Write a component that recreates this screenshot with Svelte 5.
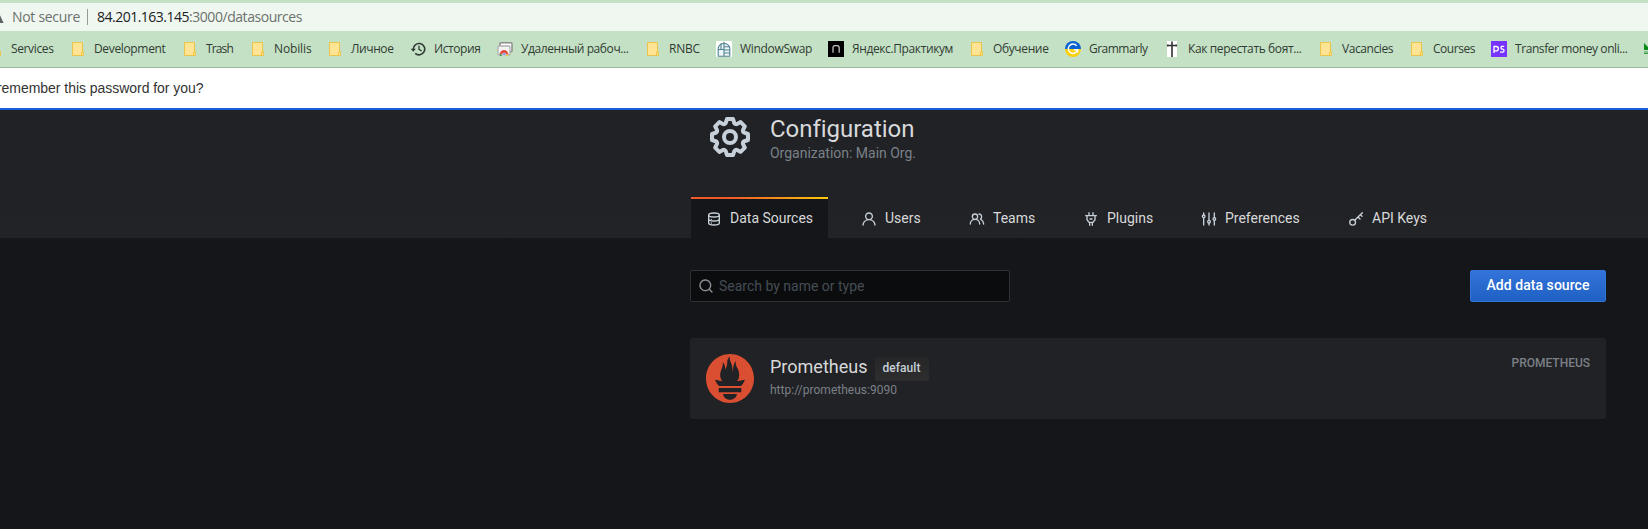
<script>
  const bookmarks = [
    { icon: 'folder', label: 'Services', item: 83, text: 42.5 },
    { icon: 'folder', label: 'Development', item: 112, text: 71.5 },
    { icon: 'folder', label: 'Trash', item: 68, text: 27 },
    { icon: 'folder', label: 'Nobilis', item: 77, text: 37.5 },
    { icon: 'folder', label: 'Личное', item: 83, text: 42.5 },
    { icon: 'history', label: 'История', item: 87, text: 46.5 },
    { icon: 'remote', label: 'Удаленный рабоч...', item: 148, text: 107.5 },
    { icon: 'folder', label: 'RNBC', item: 71, text: 31 },
    { icon: 'window', label: 'WindowSwap', item: 112, text: 72 },
    { icon: 'practicum', label: 'Яндекс.Практикум', item: 141, text: 101 },
    { icon: 'folder', label: 'Обучение', item: 96, text: 55.5 },
    { icon: 'grammarly', label: 'Grammarly', item: 99, text: 58.5 },
    { icon: 'cross', label: 'Как перестать боят...', item: 154, text: 113.5 },
    { icon: 'folder', label: 'Vacancies', item: 91, text: 51 },
    { icon: 'folder', label: 'Courses', item: 82, text: 42 },
    { icon: 'ps', label: 'Transfer money onli...', item: 153, text: 112.5 },
    { icon: 'green', label: '', item: 16, text: 0 }
  ];

  const tabs = [
    { icon: 'database', label: 'Data Sources', width: 137, active: true },
    { icon: 'user', label: 'Users', width: 68 },
    { icon: 'users', label: 'Teams', width: 74 },
    { icon: 'plug', label: 'Plugins', width: 78 },
    { icon: 'sliders', label: 'Preferences', width: 107 },
    { icon: 'key', label: 'API Keys', width: 88 }
  ];

  // Spreads the letters of a label over the given width.
  function fit(node, width) {
    const n = [...node.textContent].length;
    if (!n || !width) return;
    const natural = node.getBoundingClientRect().width;
    node.style.letterSpacing = `${(width - natural) / n}px`;
  }
</script>

<div class="screen">
  <div class="address">
    <svg class="warn" width="4" height="12" viewBox="0 0 4 12"><path d="M-4 12 L-2 0 L3.6 12Z" fill="#5f6368" /></svg>
    <span class="muted" use:fit={68}>Not secure</span>
    <i class="sep"></i>
    <span class="host" use:fit={92}>84.201.163.145</span><span class="muted" use:fit={113}>:3000/datasources</span>
  </div>

  <div class="bookmarks">
    {#each bookmarks as b}
      <div class="bookmark" style="width:{b.item}px">
        <svg width="16" height="16" viewBox="0 0 16 16">
          {#if b.icon === 'folder'}
            <path d="M2.5 1.5h10v9h1v4h-11z" fill="#ffe593" stroke="#ebc54b" />
            <path d="M11.5 14.5v-3.5h2" fill="none" stroke="#ebc54b" />
          {:else if b.icon === 'history'}
            <g fill="none" stroke="#2f3a33" stroke-width="1.6">
              <path d="M3.3 8.4A5.7 5.7 0 1 1 5.2 12.4" />
              <path d="M9 4.8v3.6l2.7 1.6" stroke-width="1.3" />
            </g>
            <path d="M.8 7.7h5L3.3 10.8z" fill="#2f3a33" />
          {:else if b.icon === 'remote'}
            <rect x="3" y="1.7" width="12" height="9" rx="1" fill="#fff" stroke="#8d8d8d" stroke-width="1.5" />
            <rect x="1" y="5" width="12" height="9" rx="1" fill="#f4f4f4" stroke="#b0b0b0" stroke-width="1.3" />
            <path d="M2.6 13.5a4.4 4.400 0 0 1 8.800 0z" fill="#e04a3f" />
            <path d="M2.600 12 5 15H3.200z" fill="#23a455" />
            <path d="M11.400 12 9 15h2z" fill="#f7c934" />
            <path d="M5.200 14a1.900 1.900 0 0 1 3.800 0z" fill="#4a80e8" stroke="#fff" stroke-width=".5" />
          {:else if b.icon === 'window'}
            <rect width="16" height="16" fill="#fff" />
            <g fill="none" stroke="#4f8191" stroke-width="1.1">
              <path d="M2.2 15.3V7a6 6 0 0 1 11.600 0v8.300z" fill="#eef6f7" />
              <path d="M8 .8v14.500M2.200 8.500H8M8 5.800h5.500M8 12h5.800M8 9h5.800M5 2.500v6" />
            </g>
          {:else if b.icon === 'practicum'}
            <rect width="16" height="16" fill="#000" />
            <path d="M5 11.700V6l1.300-1.300h3.600L11.200 6v5.700" fill="none" stroke="#bdbdbd" stroke-width="1.300" />
          {:else if b.icon === 'grammarly'}
            <path d="M0 8a8 8 0 0 1 16 0z" fill="#0a62d0" />
            <path d="M0 8a8 8 0 0 0 16 0z" fill="#fccf09" />
            <path d="M11.600 4.700A4.700 4.700 0 1 0 12.600 8.700H8.800M12.600 8.500v3.300" fill="none" stroke="#fff" stroke-width="1.500" />
          {:else if b.icon === 'cross'}
            <rect x="3" width="10" height="16" fill="#fff" />
            <path d="M8 .5V16M3.500 4.500h9M3.700 3.500v2M12.300 3.500v2" fill="none" stroke="#333" stroke-width="1.600" />
          {:else if b.icon === 'ps'}
            <rect width="16" height="16" fill="#7733ff" />
            <path d="M3 12V5.500h2.200a1.900 1.900 0 0 1 0 4.300H3.500M13.200 5.400h-2.300a1.500 1.500 0 0 0 0 2.800h1a1.500 1.500 0 0 1 0 2.900H9" fill="none" stroke="#fff" stroke-width="1.300" />
          {:else}
            <path d="M0 2 4 6v3H0z" fill="#0c8a1c" />
            <path d="M0 11h4M0 12.500h4" stroke="#3d9b4a" />
          {/if}
        </svg>
        <span use:fit={b.text}>{b.label}</span>
      </div>
    {/each}
  </div>

  <div class="notice"><span use:fit={206.5}>remember this password for you?</span></div>

  <header>
    <div class="container">
      <div class="title">
        <svg width="48" height="48" viewBox="0 0 24 24" fill="#c7d0d9"><path d="M21.32,9.55l-1.89-.63.89-1.78A1,1,0,0,0,20.13,6L18,3.87a1,1,0,0,0-1.15-.19l-1.78.89-.63-1.89A1,1,0,0,0,13.5,2h-3a1,1,0,0,0-.95.68L8.92,4.57,7.14,3.68A1,1,0,0,0,6,3.87L3.87,6a1,1,0,0,0-.19,1.15l.89,1.78-1.89.63A1,1,0,0,0,2,10.5v3a1,1,0,0,0,.68.95l1.89.63-.89,1.78A1,1,0,0,0,3.87,18L6,20.13a1,1,0,0,0,1.15.19l1.78-.89.63,1.89a1,1,0,0,0,.95.68h3a1,1,0,0,0,.95-.68l.63-1.89,1.78.89A1,1,0,0,0,18,20.13L20.13,18a1,1,0,0,0,.19-1.15l-.89-1.78,1.89-.63A1,1,0,0,0,22,13.5v-3A1,1,0,0,0,21.32,9.55ZM20,12.78l-1.2.4A2,2,0,0,0,17.64,16l.57,1.14-1.1,1.1L16,17.64a2,2,0,0,0-2.79,1.16l-.4,1.2H11.22l-.4-1.2A2,2,0,0,0,8,17.64l-1.14.57-1.1-1.1L6.36,16A2,2,0,0,0,5.2,13.18L4,12.78V11.22l1.2-.4A2,2,0,0,0,6.36,8L5.79,6.89l1.1-1.1L8,6.36A2,2,0,0,0,10.82,5.2l.4-1.2h1.56l.4,1.2A2,2,0,0,0,16,6.36l1.14-.57,1.1,1.1L17.64,8a2,2,0,0,0,1.16,2.79l1.2.4ZM12,8a4,4,0,1,0,4,4A4,4,0,0,0,12,8Zm0,6a2,2,0,1,1,2-2A2,2,0,0,1,12,14Z" /></svg>
        <div>
          <h1><span use:fit={143.5}>Configuration</span></h1>
          <p><span use:fit={146}>Organization: Main Org.</span></p>
        </div>
      </div>
      <nav>
        {#each tabs as t}
          <a class="tab" class:active={t.active} style="width:{t.width}px">
            <svg width="16" height="16" viewBox="0 0 24 24" fill="none" stroke="#c7d0d9" stroke-width="2" stroke-linecap="round">
              {#if t.icon === 'database'}
                <path d="M12 3c5 0 8 1 8 3s-3 3-8 3-8-1-8-3 3-3 8-3ZM4 6v12c0 2 3 3 8 3s8-1 8-3V6M4 12c0 2 3 3 8 3s8-1 8-3M8 12.500h.01M8 18h.01" />
              {:else if t.icon === 'user'}
                <path stroke="none" fill="#c7d0d9" d="M15.71,12.71a6,6,0,1,0-7.42,0,10,10,0,0,0-6.22,8.18,1,1,0,0,0,2,.22,8,8,0,0,1,15.9,0,1,1,0,0,0,1,.89h.11a1,1,0,0,0,.88-1.1A10,10,0,0,0,15.71,12.71ZM12,12a4,4,0,1,1,4-4A4,4,0,0,1,12,12Z" />
              {:else if t.icon === 'users'}
                <path stroke="none" fill="#c7d0d9" d="M12.3,12.22A4.92,4.92,0,0,0,14,8.5a5,5,0,0,0-10,0,4.92,4.92,0,0,0,1.7,3.72A8,8,0,0,0,1,19.5a1,1,0,0,0,2,0,6,6,0,0,1,12,0,1,1,0,0,0,2,0A8,8,0,0,0,12.3,12.22ZM9,11.5a3,3,0,1,1,3-3A3,3,0,0,1,9,11.5Zm9.74.32A5,5,0,0,0,15,3.500a1,1,0,0,0,0,2,3,3,0,0,1,3,3,3,3,0,0,1-1.500,2.590,1,1,0,0,0-.5.840,1,1,0,0,0,.45.860l.39.260.13.070a7,7,0,0,1,4,6.380,1,1,0,0,0,2,0A9,9,0,0,0,18.740,11.820Z" />
              {:else if t.icon === 'plug'}
                <path d="M9 2.500v4M15 2.500v4M4 7h16M6 7v6l3 4h6l3-4V7M10 17v4.500M14 17v4.500M10.500 12h3" />
              {:else if t.icon === 'sliders'}
                <path d="M4 3v3M4 10v11M12 3v11M12 18v3M20 3v7M20 14v7" />
                <circle cx="4" cy="8" r="2" /><circle cx="12" cy="16" r="2" /><circle cx="20" cy="12" r="2" />
              {:else}
                <circle cx="7" cy="17" r="4.300" /><path d="M10 14 21.500 2.500M15 9l3 3M18.500 5.500l2.500 2.500" />
              {/if}
            </svg>
            <span>{t.label}</span>
          </a>
        {/each}
      </nav>
    </div>
  </header>

  <main class="container">
    <div class="actions">
      <div class="search">
        <svg width="16" height="16" viewBox="0 0 24 24" fill="#8e9097"><path d="M21.71,20.29,18,16.61A9,9,0,1,0,16.61,18l3.68,3.68a1,1,0,0,0,1.42,0A1,1,0,0,0,21.71,20.29ZM11,18a7,7,0,1,1,7-7A7,7,0,0,1,11,18Z" /></svg>
        <span use:fit={145.5}>Search by name or type</span>
      </div>
      <button><span use:fit={103}>Add data source</span></button>
    </div>

    <section class="card">
      <svg width="48" height="49" viewBox="0 0 24 24" preserveAspectRatio="none" fill="#da4e31"><path d="M12 0C5.373 0 0 5.372 0 12c0 6.627 5.373 12 12 12s12-5.373 12-12c0-6.628-5.373-12-12-12zm0 22.46c-1.885 0-3.414-1.26-3.414-2.814h6.828c0 1.553-1.528 2.813-3.414 2.813zm5.64-3.745H6.36v-2.046h11.28v2.046zm-.04-3.098H6.391c-.037-.043-.075-.086-.111-.13-1.155-1.401-1.427-2.133-1.69-2.879-.005-.025 1.4.287 2.395.511 0 0 .513.119 1.262.255-.72-.843-1.147-1.915-1.147-3.01 0-2.406 1.845-4.508 1.18-6.207.648.053 1.34 1.367 1.387 3.422.689-.951.977-2.69.977-3.755 0-1.103.727-2.385 1.454-2.429-.648 1.069.168 1.984.894 4.256.272.854.237 2.29.447 3.201.07-1.892.395-4.652 1.595-5.605-.529 1.2.079 2.702.494 3.424.671 1.164 1.078 2.047 1.078 3.716a4.642 4.642 0 01-1.11 2.996c.792-.149 1.34-.283 1.34-.283l2.573-.502s-.374 1.538-1.81 3.019z" /></svg>
      <div class="info">
        <div class="name"><span use:fit={97.5}>Prometheus</span><b><span use:fit={38}>default</span></b></div>
        <div class="url"><span use:fit={127}>http://prometheus:9090</span></div>
      </div>
      <div class="type"><span use:fit={78.5}>PROMETHEUS</span></div>
    </section>
  </main>
</div>

<style>
  :global(body) { margin: 0; background: #15161a; }
  .screen { width: 1648px; height: 529px; overflow: hidden; background: #15161a; font-family: Roboto, sans-serif; }
  span { white-space: nowrap; }
  svg { display: block; flex: none; }

  .address { box-sizing: border-box; height: 31px; border-top: 3px solid #c5e1c5; background: #f0f7f0; display: flex; align-items: center; font: 14px/20px "Open Sans", sans-serif; color: #202124; }
  .warn { margin: 0 8px 0 0; }
  .muted { color: #6b716d; }
  .sep { width: 1px; height: 16px; background: #949c96; margin: 0 9px 0 7px; }

  .bookmarks { box-sizing: border-box; height: 37px; margin-left: -13px; display: flex; align-items: center; background: #c5e1c5; border-bottom: 1px solid #9fb5a0; font: 12px/18px "Open Sans", sans-serif; color: #303c33; }
  .bookmark { flex: none; display: flex; align-items: center; gap: 8px; }

  .notice { box-sizing: border-box; height: 42px; background: #fff; border-bottom: 2px solid #175ddc; display: flex; align-items: center; font: 14px/20px "Liberation Sans", sans-serif; color: #333; }
  .notice span { margin-left: -3px; }

  header { box-sizing: border-box; height: 128px; background: linear-gradient(#202226 65%, #222326); display: flex; }
  .container { width: 916px; margin-left: 690px; }
  .title { height: 87px; padding-left: 16px; display: flex; gap: 16px; box-sizing: border-box; padding-top: 3px; }
  h1 { margin: 0; height: 31px; font-size: 24px; font-weight: 400; line-height: 33px; color: #d8d9da; }
  p { margin: 0; font-size: 14px; line-height: 18px; color: #7b8087; }
  nav { display: flex; gap: 40px; padding-left: 1px; }
  .tab { box-sizing: border-box; height: 41px; display: flex; gap: 8px; padding-top: 14px; font-size: 14px; line-height: 16px; color: #d8d9da; }
  .tab span { margin-top: -1px; }
  .tab.active { padding-left: 15px; padding-top: 12px; margin-right: -7px; border-top: 2px solid; border-image: linear-gradient(90deg, #f05a28 30%, #fbca0a 99%) 1; background: #15161a; }

  .actions { display: flex; justify-content: space-between; padding-top: 32px; }
  .search { box-sizing: border-box; width: 320px; height: 32px; padding: 0 7px; border: 1px solid #2c3235; border-radius: 2px; background: #0b0c0e; display: flex; align-items: center; gap: 5px; font-size: 14px; color: #464c54; }
  button { width: 136px; height: 32px; padding: 0 0 2px; border: 1px solid #3274d9; border-radius: 2px; background: linear-gradient(#3274d9, #1f60c4); font: 500 14px/20px Roboto, sans-serif; color: #fff; }

  .card { box-sizing: border-box; height: 81px; margin-top: 36px; padding: 16px; border-radius: 3px; background: #212226; display: flex; gap: 16px; }
  .info { flex: 1; }
  .name { display: flex; gap: 7px; height: 27px; font-size: 18px; line-height: 26px; color: #d8d9da; }
  .name b { width: 54px; height: 24px; margin-top: 3px; border-radius: 2px; background: linear-gradient(#262628, #2e2e2f); text-align: center; font-size: 12px; font-weight: 500; line-height: 23px; color: #c7d0d9; }
  .url { font-size: 12px; line-height: 18px; color: #7b8087; }
  .type { font-size: 12px; font-weight: 500; line-height: 18px; color: #7b8087; }
</style>
